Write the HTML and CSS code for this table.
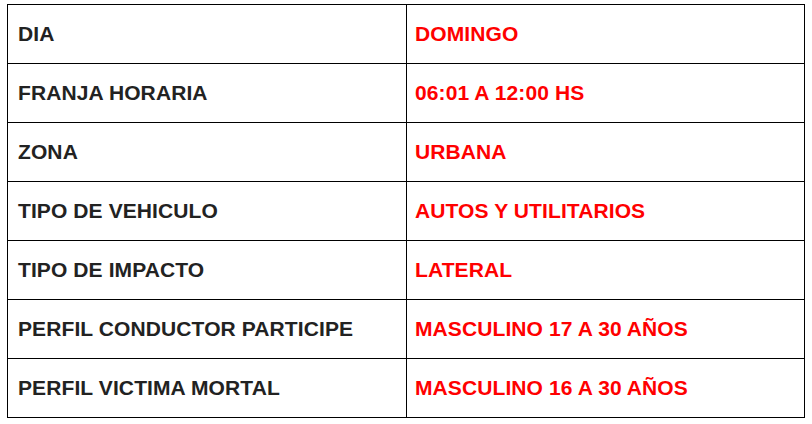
FILE: index.html
```html
<!DOCTYPE html>
<html>
<head>
<meta charset="utf-8">
<link rel="stylesheet" href="styles.css">
</head>
<body>
<table class="info">
  <tr><td class="k">DIA</td><td class="v">DOMINGO</td></tr>
  <tr><td class="k">FRANJA HORARIA</td><td class="v">06:01 A 12:00 HS</td></tr>
  <tr><td class="k">ZONA</td><td class="v">URBANA</td></tr>
  <tr><td class="k">TIPO DE VEHICULO</td><td class="v">AUTOS Y UTILITARIOS</td></tr>
  <tr><td class="k">TIPO DE IMPACTO</td><td class="v">LATERAL</td></tr>
  <tr><td class="k">PERFIL CONDUCTOR PARTICIPE</td><td class="v">MASCULINO 17 A 30 AÑOS</td></tr>
  <tr><td class="k">PERFIL VICTIMA MORTAL</td><td class="v">MASCULINO 16 A 30 AÑOS</td></tr>
</table>
</body>
</html>
```
FILE: styles.css
```css
html, body {
  margin: 0;
  padding: 0;
  background: #fff;
}
body {
  padding: 4px 0 0 7px;
  font-family: "Liberation Sans", Arial, sans-serif;
}
.info {
  border-collapse: collapse;
  width: 798px;
  table-layout: fixed;
}
.info td {
  border: 1px solid #000;
  height: 59px;
  padding: 0 0 0 10px;
  box-sizing: border-box;
  font-weight: bold;
  font-size: 21px;
  letter-spacing: 0.1px;
  vertical-align: middle;
}
.info td.k {
  width: 399px;
  color: #222;
}
.info td.v {
  color: #ff0000;
  padding-left: 8px;
}
```
